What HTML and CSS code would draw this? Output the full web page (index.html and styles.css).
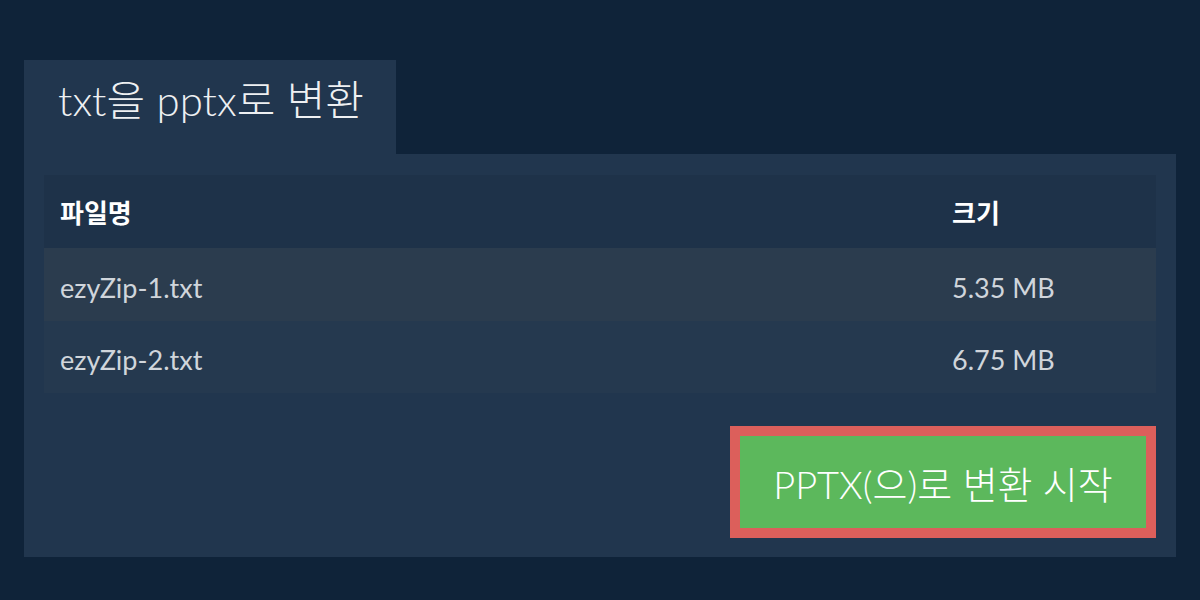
FILE: index.html
```html
<!DOCTYPE html>
<html lang="ko">
<head>
<meta charset="utf-8">
<link rel="stylesheet" href="styles.css">
</head>
<body>
<div class="page">
  <div class="tab"><h1 class="title">txt을 pptx로 변환</h1></div>
  <div class="panel">
    <div class="table">
      <div class="row head">
        <div class="c-name">파일명</div>
        <div class="c-size">크기</div>
      </div>
      <div class="row r1">
        <div class="c-name">ezyZip-1.txt</div>
        <div class="c-size">5.35 MB</div>
      </div>
      <div class="row r2">
        <div class="c-name">ezyZip-2.txt</div>
        <div class="c-size">6.75 MB</div>
      </div>
    </div>
    <div class="actions">
      <button class="btn">PPTX(으)로 변환 시작</button>
    </div>
  </div>
</div>
</body>
</html>
```
FILE: styles.css
```css
html, body {
  margin: 0;
  padding: 0;
  background: #0f2339;
  width: 1200px;
  height: 600px;
  overflow: hidden;
  font-family: "Lato", "Noto Sans CJK KR", sans-serif;
}
.page {
  padding: 60px 24px 0 24px;
}
.tab {
  display: inline-block;
  background: #21364e;
  width: 372px;
  height: 94px;
  box-sizing: border-box;
  padding-left: 34px;
}
.title {
  margin: 0;
  font-weight: 300;
  font-size: 42px;
  line-height: 80px;
  color: #eef0f2;
  white-space: nowrap;
}
.panel {
  background: #21364e;
  height: 403px;
  box-sizing: border-box;
  padding: 21px 20px 0 20px;
}
.table {
  display: flex;
  flex-direction: column;
}
.row {
  display: flex;
  align-items: center;
  height: 72px;
  padding-left: 16px;
  font-size: 27px;
  color: #d0d5db;
}
.row.head {
  height: 73px;
  background: #1e3249;
  color: #ffffff;
  font-weight: 700;
  font-size: 26px;
}
.row.r1 { background: #2b3c4e; height: 73px; padding-top: 6px; box-sizing: border-box; }
.row.r2 { background: #25394f; padding-top: 4px; box-sizing: border-box; }
.c-name { width: 892px; }
.c-size { flex: 1; }
.actions {
  display: flex;
  justify-content: flex-end;
  padding-top: 33px;
}
.btn {
  width: 426px;
  height: 112px;
  border: 10px solid #dc5f5b;
  background: #5cb85c;
  color: #ffffff;
  font-family: "Lato", "Noto Sans CJK KR", sans-serif;
  font-weight: 300;
  font-size: 38px;
  padding: 0;
  box-sizing: border-box;
}
```
